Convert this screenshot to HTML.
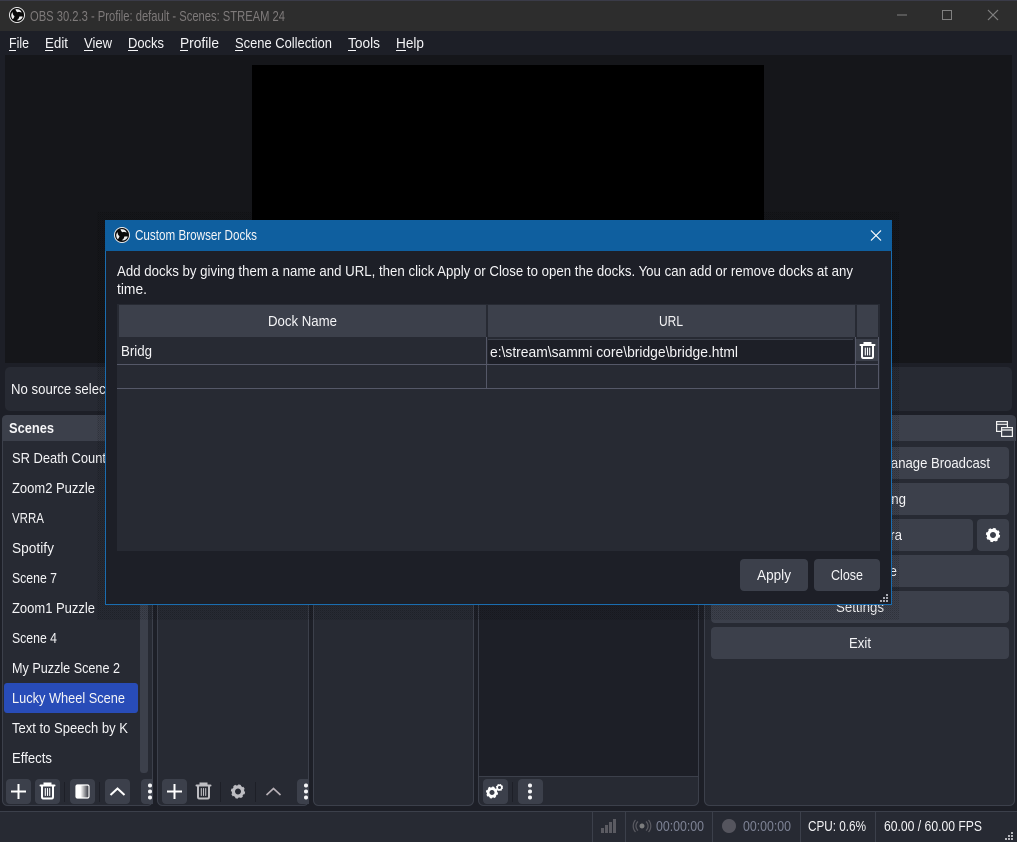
<!DOCTYPE html>
<html><head><meta charset="utf-8"><title>OBS</title>
<style>
html,body{margin:0;padding:0;background:#1d1f27;width:1017px;height:842px;overflow:hidden}
svg{display:block}
text{font-family:"Liberation Sans",sans-serif;font-size:14.5px;fill:#f5f5f7}
</style></head><body>
<svg width="1017" height="842" viewBox="0 0 1017 842" xmlns="http://www.w3.org/2000/svg">
<defs>
<g id="blade"><path d="M-1.500-5.800C1.500-6.400 4.500-4.600 4.600-2.200C3.400-3.300 1.600-3.500 .3-2.700C-.6-3.600-1.300-4.600-1.500-5.800Z" fill="#eee"/></g>
<g id="logo"><circle r="7.500" fill="#0a0a0a" stroke="#e8e8e8" stroke-width="1"/>
<use href="#blade"/><use href="#blade" transform="rotate(120)"/><use href="#blade" transform="rotate(240)"/></g>
<g id="trash" fill="none" stroke-linecap="round"><path d="M-7-5.500H7M-3-5.500V-7.500H3V-5.500" stroke-width="2"/><path d="M-5.500-5.500V6Q-5.500 7.500-4 7.500H4Q5.500 7.500 5.500 6V-5.500" stroke-width="2"/><path d="M-2.200-2.500V4.500M0-2.500V4.500M2.200-2.500V4.500" stroke-width="1.100"/></g>
<g id="gear" fill="none"><circle r="4.600" stroke-width="3.200"/><circle r="6.200" stroke-width="1.800" stroke-dasharray="2.600 2.270"/></g>
<g id="dots" fill="#f5f5f7"><circle cy="-6" r="2"/><circle r="2"/><circle cy="6" r="2"/></g>
<linearGradient id="sg"><stop offset=".35" stop-color="#fff"/><stop offset="1" stop-color="#2a2c35"/></linearGradient>
<pattern id="dith" width="2" height="2" patternUnits="userSpaceOnUse"><rect width="1" height="1" fill="#000" fill-opacity=".22"/><rect x="1" y="1" width="1" height="1" fill="#000" fill-opacity=".1"/></pattern>
<clipPath id="c1"><rect x="2" y="779" width="151" height="27"/></clipPath>
<clipPath id="c2"><rect x="157" y="779" width="152" height="27"/></clipPath>
</defs>

<!-- window chrome -->
<rect width="1017" height="842" fill="#1d1f27"/>
<rect width="1017" height="31" fill="#2d2d2d"/>
<rect width="1017" height="1" fill="#3a3b48"/>
<use href="#logo" x="17" y="15"/>
<text x="30" y="21" style="fill:#7e7a7a" textLength="255" lengthAdjust="spacingAndGlyphs">OBS 30.2.3 - Profile: default - Scenes: STREAM 24</text>
<path d="M897 15H907" stroke="#808080" stroke-width="1"/>
<rect x="942.500" y="10.500" width="9" height="9" fill="none" stroke="#808080"/>
<path d="M988 10L998 20M998 10L988 20" stroke="#808080" stroke-width="1.200"/>

<!-- menu -->
<g>
<text x="9" y="48" textLength="20" lengthAdjust="spacingAndGlyphs">File</text>
<text x="45" y="48" textLength="23" lengthAdjust="spacingAndGlyphs">Edit</text>
<text x="84" y="48" textLength="28" lengthAdjust="spacingAndGlyphs">View</text>
<text x="128" y="48" textLength="36" lengthAdjust="spacingAndGlyphs">Docks</text>
<text x="180" y="48" textLength="39" lengthAdjust="spacingAndGlyphs">Profile</text>
<text x="235" y="48" textLength="97" lengthAdjust="spacingAndGlyphs">Scene Collection</text>
<text x="348" y="48" textLength="32" lengthAdjust="spacingAndGlyphs">Tools</text>
<text x="396" y="48" textLength="28" lengthAdjust="spacingAndGlyphs">Help</text>
<path d="M9 50.500H16M45 50.500H53M84 50.500H93M128 50.500H138M180 50.500H188M235 50.500H243M348 50.500H356M396 50.500H406" stroke="#f5f5f7"/>
</g>

<!-- preview -->
<rect x="5" y="55" width="1007" height="308" fill="#15161a"/>
<rect x="252" y="65" width="512" height="298" fill="#000"/>

<!-- context bar -->
<rect x="5" y="367" width="1007" height="44" rx="5" fill="#272a33"/>
<text x="11" y="394" textLength="113" lengthAdjust="spacingAndGlyphs">No source selected</text>

<!-- Scenes dock -->
<rect x="2.500" y="415.500" width="150" height="390" rx="5" fill="#272a33" stroke="#3c404b"/>
<path d="M2 441V420Q2 415 7 415H153V441Z" fill="#3c404b"/>
<text x="9" y="433" style="font-weight:bold" textLength="45" lengthAdjust="spacingAndGlyphs">Scenes</text>
<rect x="4" y="683" width="134" height="30" rx="3" fill="#284cb8"/>
<rect x="140" y="445" width="8" height="328" rx="3" fill="#3c404b"/>
<text x="12" y="463" textLength="94" lengthAdjust="spacingAndGlyphs">SR Death Count</text>
<text x="12" y="493" textLength="83" lengthAdjust="spacingAndGlyphs">Zoom2 Puzzle</text>
<text x="12" y="523" textLength="32" lengthAdjust="spacingAndGlyphs">VRRA</text>
<text x="12" y="553" textLength="42" lengthAdjust="spacingAndGlyphs">Spotify</text>
<text x="12" y="583" textLength="45" lengthAdjust="spacingAndGlyphs">Scene 7</text>
<text x="12" y="613" textLength="83" lengthAdjust="spacingAndGlyphs">Zoom1 Puzzle</text>
<text x="12" y="643" textLength="45" lengthAdjust="spacingAndGlyphs">Scene 4</text>
<text x="12" y="673" textLength="108" lengthAdjust="spacingAndGlyphs">My Puzzle Scene 2</text>
<text x="12" y="703" textLength="113" lengthAdjust="spacingAndGlyphs">Lucky Wheel Scene</text>
<text x="12" y="733" textLength="116" lengthAdjust="spacingAndGlyphs">Text to Speech by K</text>
<text x="12" y="763" textLength="40" lengthAdjust="spacingAndGlyphs">Effects</text>
<g fill="#3c404b">
<rect x="6" y="779" width="25" height="25" rx="4"/><rect x="35" y="779" width="25" height="25" rx="4"/><rect x="70" y="779" width="25" height="25" rx="4"/><rect x="105" y="779" width="25" height="25" rx="4"/>
<rect x="141" y="779" width="25" height="25" rx="4" clip-path="url(#c1)"/>
</g>
<path d="M64.500 782V802M99.500 782V802" stroke="#1d1f27"/>
<path d="M11 791.500H26M18.500 784V799" stroke="#fff" stroke-width="2"/>
<use href="#trash" x="47.500" y="791" stroke="#fff"/>
<rect x="76" y="785" width="13" height="13" rx="1.500" fill="url(#sg)" stroke="#fff" stroke-width="1.200"/>
<path d="M110.500 795L117.500 788.500L124.500 795" fill="none" stroke="#fff" stroke-width="2"/>
<use href="#dots" x="150" y="791.500"/>

<!-- Sources dock -->
<rect x="157.500" y="415.500" width="151" height="390" rx="5" fill="#272a33" stroke="#3c404b"/>
<g fill="#3c404b"><rect x="162" y="779" width="25" height="25" rx="4"/><rect x="297" y="779" width="25" height="25" rx="4" clip-path="url(#c2)"/></g>
<path d="M220.500 782V802M255.500 782V802" stroke="#1d1f27"/>
<path d="M167 791.500H182M174.500 784V799" stroke="#fff" stroke-width="2"/>
<use href="#trash" x="203.500" y="791" stroke="#bdbdc2"/>
<use href="#gear" x="238" y="791.500" stroke="#bdbdc2"/>
<path d="M266.500 795L273.500 788.500L280.500 795" fill="none" stroke="#b9b2b8" stroke-width="1.600"/>
<use href="#dots" x="306" y="791.500"/>

<!-- Mixer dock -->
<rect x="313.500" y="415.500" width="160" height="390" rx="5" fill="#272a33" stroke="#3c404b"/>

<!-- Transitions dock -->
<rect x="478.500" y="415.500" width="220" height="390" rx="5" fill="#272a33" stroke="#3c404b"/>
<rect x="479" y="416" width="219" height="360" fill="#1d1f27"/>
<path d="M479 776.500H698" stroke="#3c404b"/>
<rect x="483" y="779" width="25" height="25" rx="4" fill="#3c404b"/>
<rect x="518" y="779" width="25" height="25" rx="4" fill="#3c404b"/>
<path d="M512.500 782V802" stroke="#1d1f27"/>
<use href="#gear" x="492" y="792.500" stroke="#fff" transform="translate(492 792.500) scale(.85) translate(-492 -792.500)"/>
<use href="#gear" x="499.500" y="787.500" stroke="#fff" transform="translate(499.500 787.500) scale(.5) translate(-499.500 -787.500)"/>
<use href="#dots" x="530" y="791.500"/>

<!-- Controls dock -->
<rect x="704.500" y="415.500" width="310" height="390" rx="5" fill="#272a33" stroke="#3c404b"/>
<path d="M704 441V420Q704 415 709 415H1011Q1016 415 1016 420V441Z" fill="#3c404b"/>
<g fill="none" stroke="#f2f2f2" stroke-width="1.200">
<rect x="996.600" y="421.600" width="10.800" height="9.800"/>
<rect x="1001.600" y="427.600" width="10.800" height="8.800" fill="#3c404b"/>
<path d="M997 424.300H1007M1002 430H1012"/>
</g>
<g fill="#3c404b">
<rect x="711" y="447" width="298" height="32" rx="4"/>
<rect x="711" y="483" width="298" height="32" rx="4"/>
<rect x="711" y="519" width="262" height="32" rx="4"/>
<rect x="977" y="519" width="32" height="32" rx="4"/>
<rect x="711" y="555" width="298" height="32" rx="4"/>
<rect x="711" y="591" width="298" height="32" rx="4"/>
<rect x="711" y="627" width="298" height="32" rx="4"/>
</g>
<text x="880" y="468" textLength="110" lengthAdjust="spacingAndGlyphs">Manage Broadcast</text>
<text x="814" y="504" textLength="92" lengthAdjust="spacingAndGlyphs">Start Streaming</text>
<text x="782" y="540" textLength="120" lengthAdjust="spacingAndGlyphs">Start Virtual Camera</text>
<text x="823" y="576" textLength="74" lengthAdjust="spacingAndGlyphs">Studio Mode</text>
<text x="836" y="612" textLength="48" lengthAdjust="spacingAndGlyphs">Settings</text>
<text x="849" y="648" textLength="22" lengthAdjust="spacingAndGlyphs">Exit</text>
<use href="#gear" x="993" y="535" stroke="#fff"/>

<!-- status bar -->
<rect x="0" y="811" width="1017" height="31" fill="#272a33"/>
<path d="M0 811.500H1017" stroke="#3c404b"/>
<path d="M592.500 812V842M625.500 812V842M712.500 812V842M800.500 812V842M875.500 812V842" stroke="#3c404b"/>
<g fill="#5b5b62"><rect x="601" y="828" width="3" height="5"/><rect x="605" y="825" width="3" height="8"/><rect x="609" y="822" width="3" height="11"/><rect x="613" y="819" width="3" height="14"/></g>
<circle cx="642" cy="826" r="2.500" fill="#7c7d7e"/>
<path d="M638 821.500A6 6 0 0 0 638 830.500M646 821.500A6 6 0 0 1 646 830.500M635.500 820A9 9 0 0 0 635.500 832M648.500 820A9 9 0 0 1 648.500 832" fill="none" stroke="#5b5b62" stroke-width="1.200"/>
<text x="656" y="831" style="fill:#7d8294" textLength="48" lengthAdjust="spacingAndGlyphs">00:00:00</text>
<circle cx="729" cy="826" r="7" fill="#55555e"/>
<text x="743" y="831" style="fill:#7d8294" textLength="48" lengthAdjust="spacingAndGlyphs">00:00:00</text>
<text x="808" y="831" textLength="58" lengthAdjust="spacingAndGlyphs">CPU: 0.6%</text>
<text x="884" y="831" textLength="98" lengthAdjust="spacingAndGlyphs">60.00 / 60.00 FPS</text>
<g fill="#b5b6bb"><rect x="1011" y="832" width="2" height="2"/><rect x="1008" y="835" width="2" height="2"/><rect x="1011" y="835" width="2" height="2"/><rect x="1005" y="838" width="2" height="2"/><rect x="1008" y="838" width="2" height="2"/><rect x="1011" y="838" width="2" height="2"/></g>

<!-- Dialog shadow -->
<rect x="97" y="212" width="802" height="408" fill="url(#dith)"/>

<!-- Dialog -->
<rect x="105.500" y="220.500" width="786" height="384" fill="#1d1f27" stroke="#1a6db0"/>
<rect x="105" y="220" width="787" height="31" fill="#0f5f9f"/>
<use href="#logo" x="122" y="235"/>
<text x="135" y="240" textLength="122" lengthAdjust="spacingAndGlyphs">Custom Browser Docks</text>
<path d="M871 230.500L881 240.500M881 230.500L871 240.500" stroke="#fff" stroke-width="1.200"/>
<text x="117" y="276" textLength="736" lengthAdjust="spacingAndGlyphs">Add docks by giving them a name and URL, then click Apply or Close to open the docks. You can add or remove docks at any</text>
<text x="117" y="294" textLength="30" lengthAdjust="spacingAndGlyphs">time.</text>

<!-- table -->
<rect x="117" y="304" width="763" height="247" fill="#272a33"/>
<rect x="119" y="305" width="367" height="32" fill="#3c404b"/>
<rect x="488" y="305" width="367" height="32" fill="#3c404b"/>
<rect x="857" y="305" width="21" height="32" fill="#3c404b"/>
<text x="268" y="326" textLength="69" lengthAdjust="spacingAndGlyphs">Dock Name</text>
<text x="659" y="326" textLength="24" lengthAdjust="spacingAndGlyphs">URL</text>
<path d="M117 364.500H879M117 388.500H879M486.500 337V389M855.500 337V389M878.500 337V389" stroke="#555868"/>
<text x="121" y="356" textLength="31" lengthAdjust="spacingAndGlyphs">Bridg</text>
<rect x="488" y="339" width="366.500" height="25" rx="2" fill="#1d1f27"/>
<path d="M488 339.500H853" stroke="#3c404b"/>
<text x="490" y="357" textLength="248" lengthAdjust="spacingAndGlyphs">e:\stream\sammi core\bridge\bridge.html</text>
<rect x="856" y="339" width="22" height="22" fill="#3c404b"/>
<use href="#trash" x="867.500" y="350.500" stroke="#fff"/>

<!-- dialog buttons -->
<rect x="740" y="559" width="68" height="32" rx="4" fill="#3c404b"/>
<rect x="814" y="559" width="66" height="32" rx="4" fill="#3c404b"/>
<text x="757" y="580" textLength="34" lengthAdjust="spacingAndGlyphs">Apply</text>
<text x="831" y="580" textLength="32" lengthAdjust="spacingAndGlyphs">Close</text>
<g fill="#a8aab2"><rect x="886" y="594" width="2" height="2"/><rect x="883" y="597" width="2" height="2"/><rect x="886" y="597" width="2" height="2"/><rect x="880" y="600" width="2" height="2"/><rect x="883" y="600" width="2" height="2"/><rect x="886" y="600" width="2" height="2"/></g>
</svg>
</body></html>
